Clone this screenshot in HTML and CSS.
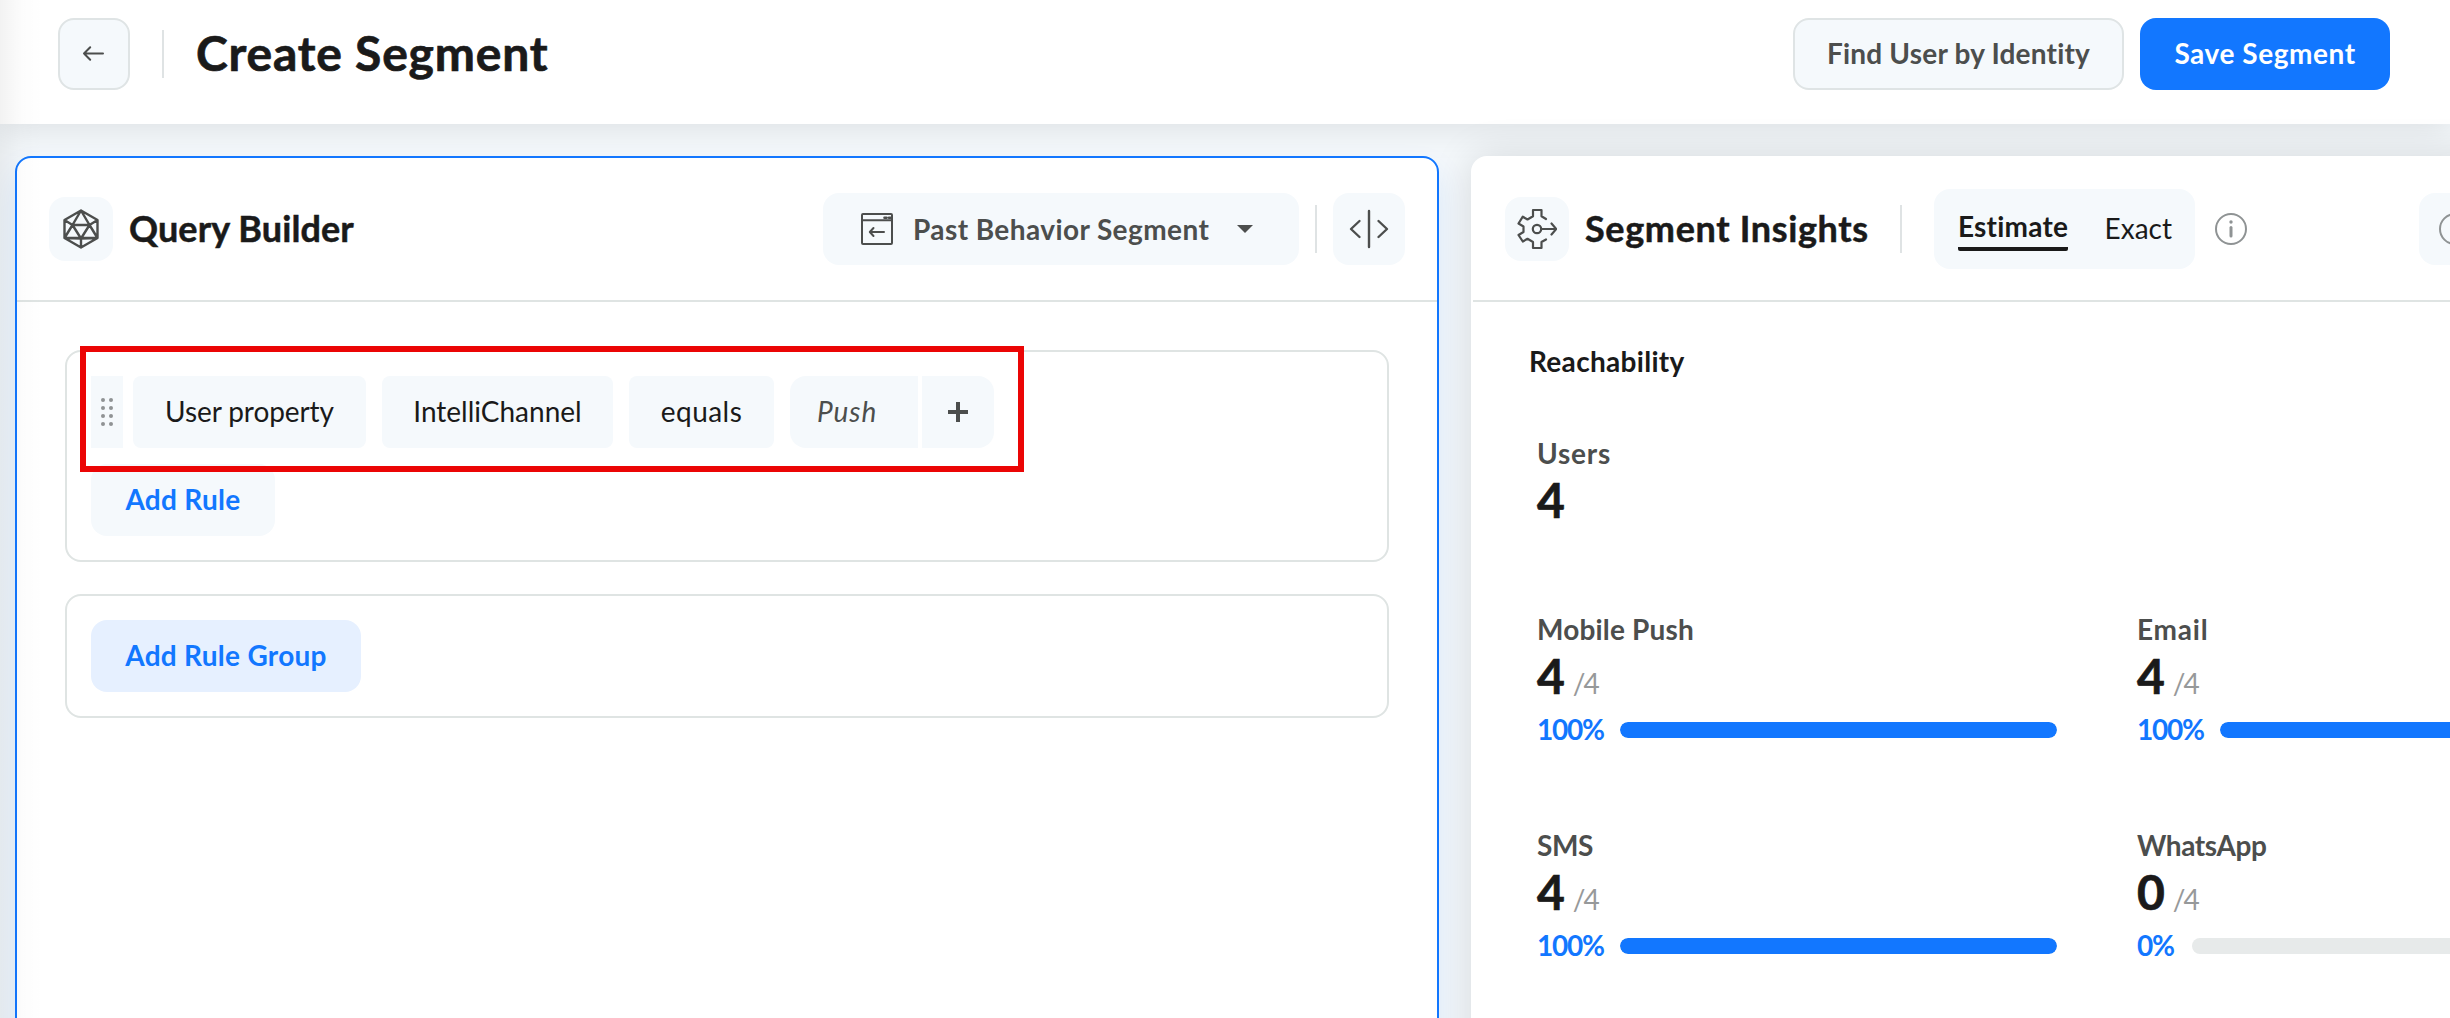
FILE: index.html
```html
<!DOCTYPE html>
<html lang="en">
<head>
<meta charset="utf-8">
<title>Create Segment</title>
<link rel="stylesheet" href="styles.css">
</head>
<body>
<div class="app">
  <header class="topbar">
    <button class="btn btn-outline btn-back" aria-label="Back">
      <svg width="24" height="24" viewBox="0 0 24 24" fill="none" stroke="#4c4e4d" stroke-width="2" stroke-linecap="round" stroke-linejoin="round"><path d="M21 11.500H2M8.200 5.200L2 11.500L8.200 17.800"/></svg>
    </button>
    <span class="vline"></span>
    <h1 class="page-title">Create Segment</h1>
    <div class="actions">
      <button class="btn btn-outline btn-find">Find User by Identity</button>
      <button class="btn btn-primary">Save Segment</button>
    </div>
  </header>

  <main class="workspace">
    <section class="panel panel-query">
      <div class="panel-head">
        <span class="icon-tile">
          <svg width="40" height="40" viewBox="0 0 40 40" fill="none" stroke="#4c4e4d" stroke-width="2.400" stroke-linejoin="round"><path d="M20 1.500L36.500 11V29L20 38.500L3.500 29V11ZM20 1.500L11.500 16H28.500ZM3.500 11L11.500 16L3.500 29L20 29.500L36.500 29L28.500 16L36.500 11M11.500 16L20 29.500L28.500 16M20 29.500V38.500M3.500 29H36.500"/></svg>
        </span>
        <h2 class="panel-title title-query">Query Builder</h2>
        <div class="head-tools">
          <button class="select">
            <svg width="32" height="32" viewBox="0 0 32 32" fill="none" stroke="#4c4e4d" stroke-width="2" stroke-linecap="round" stroke-linejoin="round"><rect x="1" y="1" width="30" height="30" rx="1"/><path d="M1 7.200H31M23 19H9M12.500 15L8.800 19L12.500 23"/><path d="M23.500 4.800H25.500M28 4.800H29.500" stroke-width="2.600"/></svg>
            <span class="select-text">Past Behavior Segment</span>
            <svg class="caret" width="16" height="8" viewBox="0 0 16 8"><path d="M0 0H16L8 8Z" fill="#4c4e4d"/></svg>
          </button>
          <span class="vline"></span>
          <button class="tile-btn" aria-label="Resize panels">
            <svg width="40" height="40" viewBox="0 0 40 40" fill="none" stroke="#4c4e4d" stroke-width="2.400" stroke-linecap="round" stroke-linejoin="round"><path d="M20 2V38M10.500 12L2 20L10.500 28M29.500 12L38 20L29.500 28"/></svg>
          </button>
        </div>
      </div>

      <div class="panel-body">
        <div class="group">
          <div class="rule">
            <span class="drag">
              <svg width="12" height="34" viewBox="0 0 12 34" fill="#8f9394"><circle cx="2" cy="5" r="2"/><circle cx="10" cy="5" r="2"/><circle cx="2" cy="13" r="2"/><circle cx="10" cy="13" r="2"/><circle cx="2" cy="21" r="2"/><circle cx="10" cy="21" r="2"/><circle cx="2" cy="29" r="2"/><circle cx="10" cy="29" r="2"/></svg>
            </span>
            <span class="chip chip-source">User property</span>
            <span class="chip chip-property">IntelliChannel</span>
            <span class="chip chip-operator">equals</span>
            <span class="value">
              <span class="value-text">Push</span>
              <button class="value-add" aria-label="Add value">
                <svg width="20" height="20" viewBox="0 0 20 20" fill="#4c4e4d"><path d="M8 0H12V8H20V12H12V20H8V12H0V8H8Z"/></svg>
              </button>
            </span>
          </div>
          <button class="add add-rule">Add Rule</button>
          <div class="highlight"></div>
        </div>
        <div class="group">
          <button class="add add-group">Add Rule Group</button>
        </div>
      </div>
    </section>

    <section class="panel panel-insights">
      <div class="panel-head">
        <span class="icon-tile">
          <svg width="40" height="42" viewBox="0 0 40 42" fill="none" stroke="#4c4e4d" stroke-width="2.200" stroke-linecap="round" stroke-linejoin="round"><path d="M29 11L24.500 8.200V2H16V8.200L10.500 11.500L5.800 8.700L1.500 15.500L6.500 18.500V24L1.500 27L5.800 33.500L10.500 30.800L16 34V40H24.500V34L29 31.500"/><circle cx="20" cy="21" r="4.200"/><path d="M24.200 21H39M34.500 15.500L39.300 21L34.500 26.500"/></svg>
        </span>
        <h2 class="panel-title title-insights">Segment Insights</h2>
        <span class="vline"></span>
        <div class="toggle">
          <span class="tab tab-active">Estimate</span>
          <span class="tab">Exact</span>
        </div>
        <svg class="info" width="32" height="32" viewBox="0 0 32 32" fill="none" stroke="#8f9394" stroke-linecap="round"><circle cx="16" cy="16" r="15" stroke-width="2"/><path d="M16 14.500V23" stroke-width="3"/><circle cx="16" cy="9" r="1.700" fill="#8f9394" stroke="none"/></svg>
        <button class="tile-btn" aria-label="Refresh">
          <svg width="32" height="32" viewBox="0 0 32 32" fill="none" stroke="#8f9394" stroke-width="2"><circle cx="16" cy="16" r="15"/></svg>
        </button>
      </div>

      <div class="insights-body">
        <h3 class="section-title">Reachability</h3>
        <div class="metric metric-total">
          <div class="label label-users">Users</div>
          <div class="count">4</div>
        </div>
        <div class="metrics">
          <div class="metric">
            <div class="label">Mobile Push</div>
            <div class="count">4<span class="of">/4</span></div>
            <div class="progress"><span class="pct">100%</span><span class="track"><span class="fill" style="width:100%"></span></span></div>
          </div>
          <div class="metric">
            <div class="label label-email">Email</div>
            <div class="count">4<span class="of">/4</span></div>
            <div class="progress"><span class="pct">100%</span><span class="track"><span class="fill" style="width:100%"></span></span></div>
          </div>
          <div class="metric">
            <div class="label label-tight">SMS</div>
            <div class="count">4<span class="of">/4</span></div>
            <div class="progress"><span class="pct">100%</span><span class="track"><span class="fill" style="width:100%"></span></span></div>
          </div>
          <div class="metric">
            <div class="label label-tight">WhatsApp</div>
            <div class="count">0<span class="of">/4</span></div>
            <div class="progress"><span class="pct pct-short">0%</span><span class="track"><span class="fill" style="width:0%"></span></span></div>
          </div>
        </div>
      </div>
    </section>
  </main>
  <div class="edge-shade"></div>
</div>
</body>
</html>
```
FILE: styles.css
```css
* { box-sizing: border-box; }

body {
  margin: 0;
  font-family: Lato, "Liberation Sans", sans-serif;
  font-size: 28px;
  color: #1a1a1a;
}

h1, h2, h3 { margin: 0; font-weight: 700; }

button {
  margin: 0;
  padding: 0;
  border: 0;
  font: inherit;
  color: inherit;
}

svg { display: block; flex: none; }

.app {
  position: relative;
  display: flex;
  flex-direction: column;
  width: 2450px;
  height: 1018px;
  overflow: hidden;
  background: #f4f8fb;
}

/* Top bar */
.topbar {
  flex: none;
  display: flex;
  align-items: center;
  height: 124px;
  padding: 0 60px 16px 58px;
  background: #fff;
  box-shadow: 0 4px 32px rgba(0, 0, 0, 0.1);
}

.vline {
  flex: none;
  width: 2px;
  height: 48px;
  background: #dfe3e4;
}

.btn {
  display: flex;
  align-items: center;
  justify-content: center;
  height: 72px;
  padding-bottom: 2px;
  border-radius: 16px;
  font-weight: 700;
  white-space: nowrap;
}

.btn-outline {
  border: 2px solid #dfe4e5;
  background: #f5f9fc;
  color: #4c4e4d;
}

.btn-back { width: 72px; margin-right: 32px; padding-bottom: 0; }
.btn-find { width: 331px; letter-spacing: 0.2px; }
.btn-primary { width: 250px; background: #1277ff; color: #fff; letter-spacing: 0.55px; }

.page-title {
  margin-left: 32px;
  padding-bottom: 2px;
  font-size: 48px;
  line-height: 56px;
  letter-spacing: 0.8px;
  -webkit-text-stroke: 0.7px currentColor;
}

.actions { display: flex; gap: 16px; margin-left: auto; }

/* Panels */
.workspace {
  flex: 1;
  display: flex;
  gap: 32px;
  padding: 32px 0 0 15px;
  min-height: 0;
}

.panel {
  flex: none;
  height: 940px;
  border: 2px solid #fff;
  border-radius: 16px;
  background: #fff;
}

.panel-query {
  width: 1424px;
  border-color: #1277ff;
  box-shadow: 0 16px 32px rgba(18, 119, 255, 0.1);
}

.panel-insights {
  width: 1255px;
  box-shadow: 0 0 40px rgba(0, 0, 0, 0.13);
}

.panel-head {
  display: flex;
  align-items: center;
  height: 144px;
  padding: 0 32px;
  border-bottom: 2px solid #dfe4e3;
}

.icon-tile, .tile-btn {
  flex: none;
  display: flex;
  align-items: center;
  justify-content: center;
  width: 64px;
  height: 64px;
  border-radius: 16px;
  background: #f5f9fc;
}

.tile-btn { width: 72px; height: 72px; }

.panel-title {
  padding-bottom: 3px;
  font-size: 36px;
  line-height: 44px;
  white-space: nowrap;
  -webkit-text-stroke: 0.5px currentColor;
}

.title-query { margin-left: 16px; letter-spacing: 0.1px; }
.title-insights { width: 315px; margin-left: 16px; letter-spacing: 0.65px; }

.head-tools { display: flex; align-items: center; gap: 16px; margin-left: auto; }

.select {
  display: flex;
  align-items: center;
  width: 476px;
  height: 72px;
  padding: 0 46px 0 38px;
  border-radius: 16px;
  background: #f5f9fc;
  color: #4c4e4d;
  font-weight: 700;
  white-space: nowrap;
}

.select-text { margin-left: 20px; padding-bottom: 1px; letter-spacing: 0.41px; }
.caret { margin-left: auto; }

/* Query rules */
.panel-body {
  display: flex;
  flex-direction: column;
  gap: 32px;
  padding: 48px;
}

.group {
  position: relative;
  display: flex;
  flex-direction: column;
  align-items: flex-start;
  gap: 16px;
  padding: 24px;
  border: 2px solid #dfe4e3;
  border-radius: 16px;
}

.rule { display: flex; height: 72px; }

.drag {
  display: flex;
  align-items: center;
  justify-content: center;
  width: 32px;
  margin-right: 10px;
  background: #f5f9fc;
}

.chip {
  display: flex;
  align-items: center;
  justify-content: center;
  margin-right: 16px;
  padding-bottom: 2px;
  border-radius: 8px;
  background: #f5f9fc;
}

.chip-source { width: 233px; letter-spacing: -0.09px; }
.chip-property { width: 231px; letter-spacing: 0; }
.chip-operator { width: 145px; letter-spacing: 0.45px; }

.value { display: flex; gap: 4px; }

.value-text {
  display: flex;
  align-items: center;
  width: 128px;
  padding: 0 0 2px 27px;
  border-radius: 16px 0 0 16px;
  background: #f5f9fc;
  color: #4c4e4d;
  font-style: italic;
  letter-spacing: 0.95px;
}

.value-add {
  display: flex;
  align-items: center;
  justify-content: center;
  width: 72px;
  border-radius: 0 16px 16px 0;
  background: #f5f9fc;
}

.add {
  height: 72px;
  padding-bottom: 2px;
  border-radius: 16px;
  color: #1277ff;
  font-weight: 700;
  letter-spacing: 0.28px;
}

.add-rule { width: 184px; background: #f5f9fc; }
.add-group { width: 270px; background: #e6f0ff; }

.highlight {
  position: absolute;
  left: 13px;
  top: -6px;
  width: 944px;
  height: 126px;
  border: 6px solid #eb0505;
}

/* Insights */
.toggle {
  flex: none;
  display: flex;
  justify-content: space-between;
  width: 261px;
  height: 80px;
  margin-left: 32px;
  padding: 18px 23px 18px 24px;
  border-radius: 16px;
  background: #f5f9fc;
}

.tab { padding-top: 3px; line-height: 36px; height: 44px; }

.tab-active {
  padding-top: 1px;
  border-bottom: 4px solid #1a1a1a;
  border-radius: 2px;
  font-weight: 700;
  letter-spacing: 0.2px;
}

.info { margin: 0 172px 0 20px; }

.insights-body { padding: 40px 0 0 64px; }

.section-title {
  margin: 0 0 52px -8px;
  font-size: 28px;
  line-height: 38px;
  padding-bottom: 2px;
  letter-spacing: 0.3px;
}

.metric-total { margin-bottom: 84px; }

.metrics {
  display: grid;
  grid-template-columns: 520px 520px;
  gap: 76px 80px;
}

.label {
  line-height: 38px;
  padding-bottom: 2px;
  color: #4c4e4d;
  font-weight: 700;
  letter-spacing: 0.18px;
}

.label-users, .label-email { letter-spacing: 0.8px; }
.label-tight { letter-spacing: -0.4px; }

.count {
  height: 52px;
  font-size: 48px;
  font-weight: 700;
  line-height: 52px;
  -webkit-text-stroke: 0.7px currentColor;
}

.of {
  margin-left: 8px;
  color: #97999a;
  font-size: 28px;
  font-weight: 400;
  line-height: 1;
  letter-spacing: -2px;
  -webkit-text-stroke: 0;
}

.progress {
  display: flex;
  align-items: center;
  height: 40px;
  margin-top: 8px;
}

.pct {
  width: 83px;
  padding-bottom: 2px;
  color: #1277ff;
  font-weight: 700;
  letter-spacing: -1.2px;
}

.pct-short { width: 55px; }

.track {
  flex: 1;
  height: 16px;
  border-radius: 8px;
  background: #e7eaea;
  overflow: hidden;
}

.fill { display: block; height: 16px; border-radius: 8px; background: #1277ff; }

.edge-shade {
  position: absolute;
  left: 0;
  top: 0;
  width: 44px;
  height: 1018px;
  background: linear-gradient(to right, rgba(0, 0, 0, 0.05), rgba(0, 0, 0, 0.012) 50%, rgba(0, 0, 0, 0));
  pointer-events: none;
}
```
